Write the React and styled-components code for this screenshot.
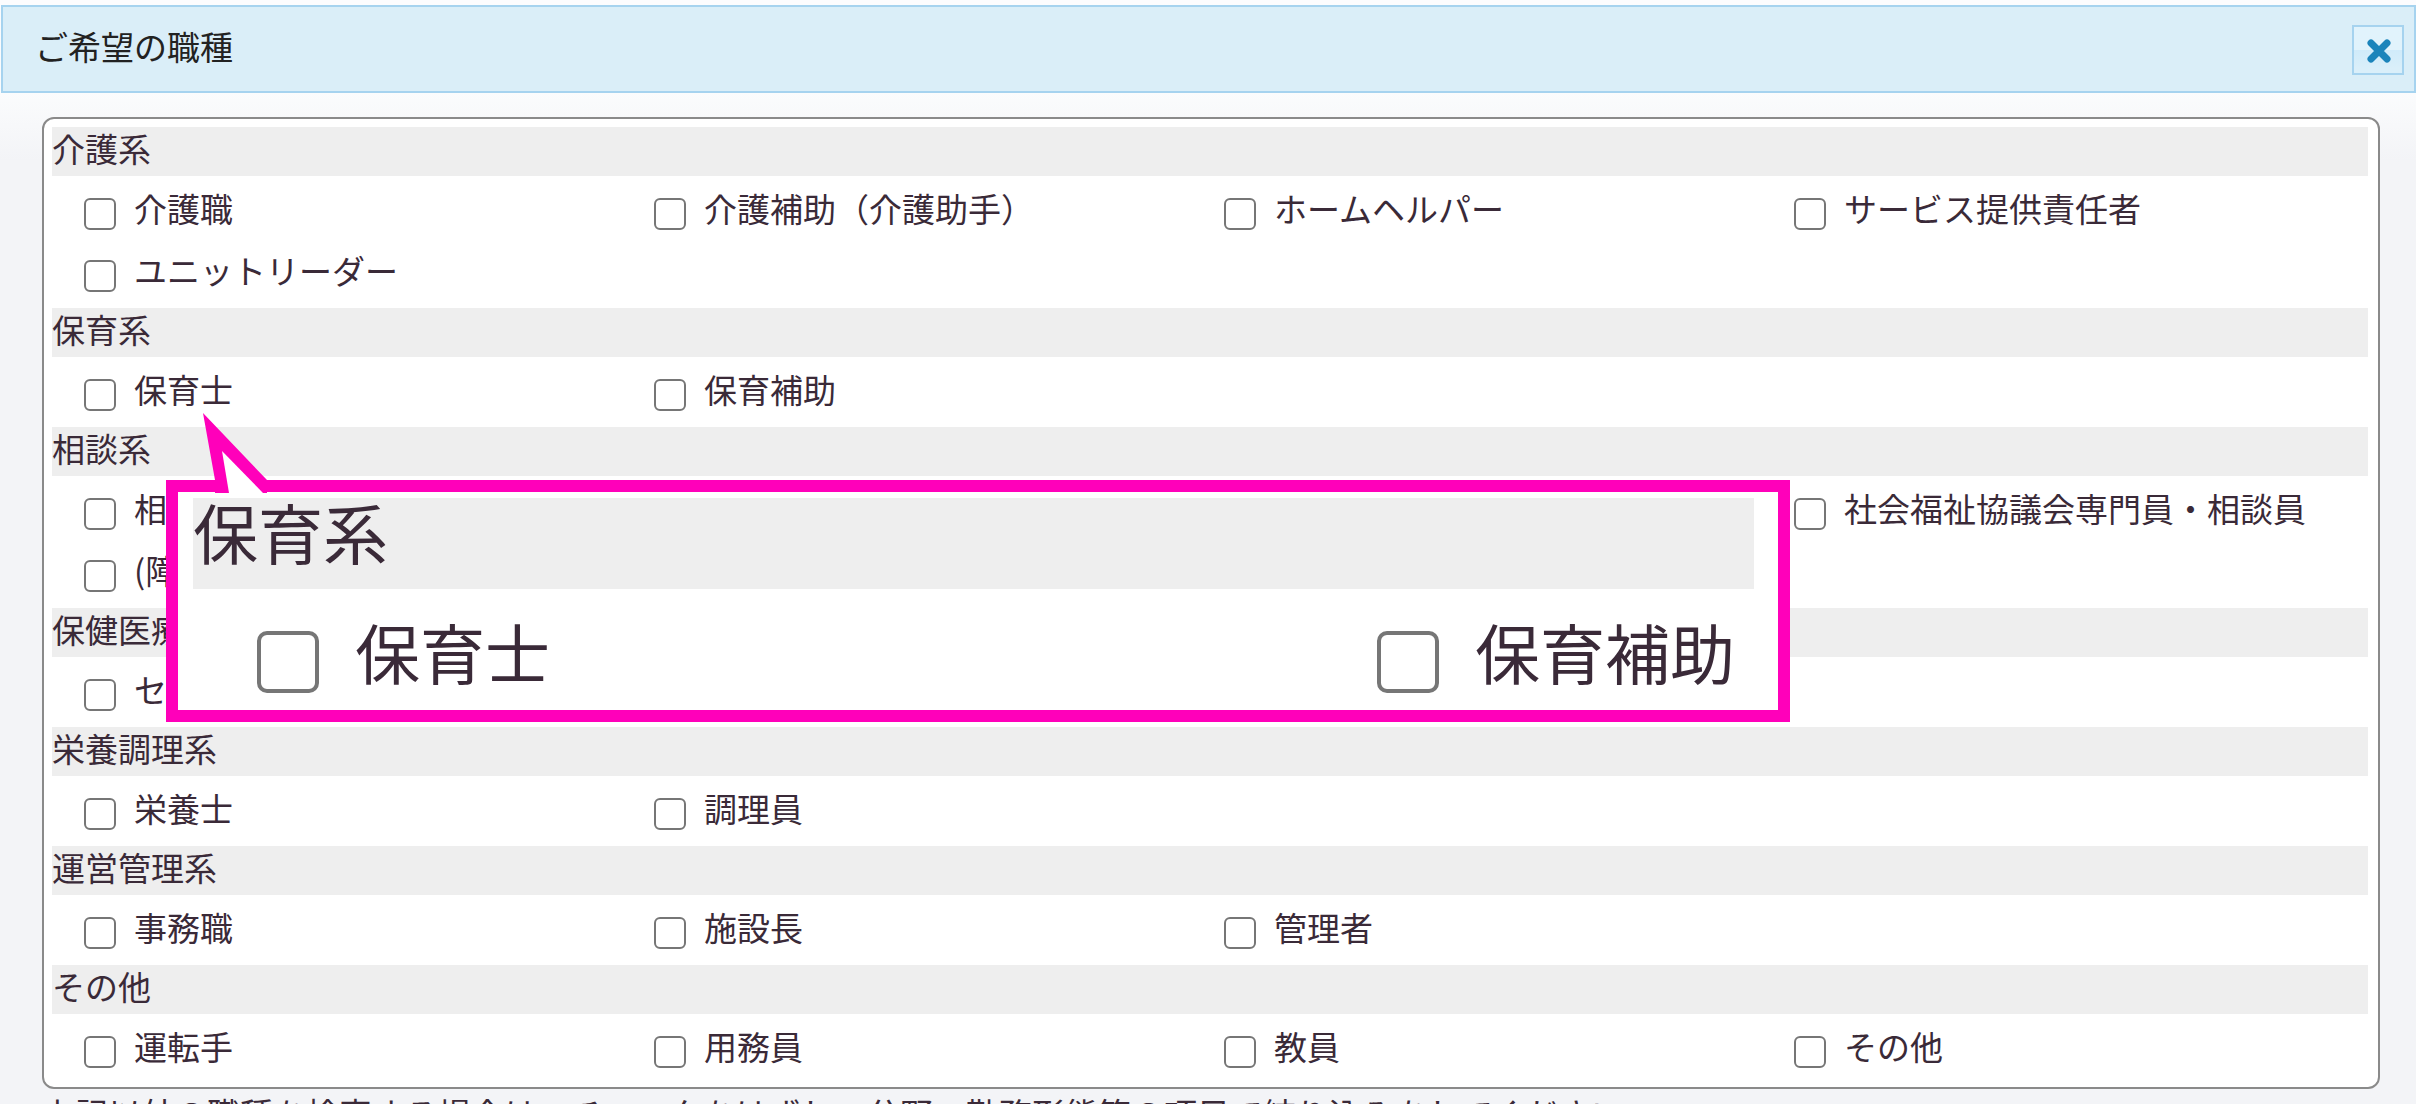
import React, { useId } from "react";
import styled, { createGlobalStyle } from "styled-components";

const GlobalStyle = createGlobalStyle`
  *, *::before, *::after { box-sizing: border-box; }
  html, body { margin: 0; height: 100%; overflow: hidden; }
  body {
    font-family: "Noto Sans CJK JP", sans-serif;
    font-size: 33px;
    line-height: 48px;
    color: #3a2a38;
    background: #f3f4f7;
  }
`;

const Dialog = styled.main`
  position: relative;
  height: 100vh;
  overflow: hidden;
  padding-top: 5px;
  background: linear-gradient(#fcfcfe 0, #fbfcfd 92px, #f3f4f7 160px);
`;

const TitleBar = styled.header`
  display: flex;
  align-items: center;
  justify-content: space-between;
  height: 88px;
  margin: 0 0 0 1px;
  padding: 2px 10px 0 32px;
  border: 2px solid #a6d3ef;
  background: #daeef8;
`;

const Title = styled.h1`
  margin: 0;
  padding-bottom: 8px;
  font-size: 33px;
  font-weight: 400;
  color: #222;
`;

const CloseButton = styled.button`
  display: grid;
  place-items: center;
  width: 52px;
  height: 50px;
  padding: 2px 0 0 2px;
  border: 2px solid #a6d3ef;
  background: linear-gradient(#e1f3fc 50%, #d0ebfa 50%, #daeffa 90%);
  cursor: pointer;
`;

const Panel = styled.section`
  margin: 24px 36px 0 42px;
  padding: 8px 10px 3px 8px;
  border: 2px solid #8a8a8a;
  border-radius: 12px;
  background: #fff;
`;

const Group = styled.fieldset`
  display: block;
  margin: 0;
  padding: 0;
  border: 0;
  min-width: 0;
`;

const GroupName = styled.legend`
  display: block;
  width: 100%;
  height: ${(p) => (p.$large ? 91 : 49)}px;
  margin-bottom: ${(p) => (p.$large ? 16 : 8)}px;
  padding: 0;
  font-size: ${(p) => (p.$large ? 65 : 33)}px;
  line-height: ${(p) => (p.$large ? 66 : 42)}px;
  background: #eee;
  white-space: nowrap;
`;

const Options = styled.div`
  display: grid;
  grid-template-columns: ${(p) => (p.$large ? "1120px 1fr" : "repeat(4, 1fr)")};
  padding: ${(p) => (p.$large ? "0 0 0 64px" : "0 4px 0 32px")};
`;

const Option = styled.div`
  display: flex;
  align-items: flex-start;
  gap: ${(p) => (p.$large ? 36 : 18)}px;
  height: ${(p) => (p.$large ? 116 : 62)}px;
  grid-column: ${(p) => p.$column || "auto"};
`;

const Check = styled.input`
  appearance: none;
  flex: none;
  width: ${(p) => (p.$large ? 62 : 32)}px;
  height: ${(p) => (p.$large ? 62 : 32)}px;
  margin: ${(p) => (p.$large ? 26 : 14)}px 0 0;
  border: ${(p) => (p.$large ? 4 : 2)}px solid #767676;
  border-radius: ${(p) => (p.$large ? 10 : 6)}px;
  background: #fff;
`;

const OptionLabel = styled.label`
  font-size: ${(p) => (p.$large ? 65 : 33)}px;
  line-height: ${(p) => (p.$large ? 92 : 48)}px;
  white-space: nowrap;
`;

const Note = styled.p`
  margin: 0 0 0 42px;
  white-space: nowrap;
`;

const Callout = styled.aside`
  position: absolute;
  top: 480px;
  left: 166px;
  width: 1624px;
  height: 242px;
  padding: 6px 24px 0 15px;
  border: 12px solid #ff00ba;
  background: #fff;
`;

const CalloutTail = styled.svg`
  position: absolute;
  left: 24px;
  top: -79px;
`;

const groups = [
  {
    name: "介護系",
    options: [
      { text: "介護職" },
      { text: "介護補助（介護助手）" },
      { text: "ホームヘルパー" },
      { text: "サービス提供責任者" },
      { text: "ユニットリーダー" },
    ],
  },
  { name: "保育系", options: [{ text: "保育士" }, { text: "保育補助" }] },
  {
    name: "相談系",
    options: [
      { text: "相" },
      { text: "社会福祉協議会専門員・相談員", column: 4 },
      { text: "(障" },
    ],
  },
  { name: "保健医療", options: [{ text: "セ" }] },
  { name: "栄養調理系", options: [{ text: "栄養士" }, { text: "調理員" }] },
  {
    name: "運営管理系",
    options: [{ text: "事務職" }, { text: "施設長" }, { text: "管理者" }],
  },
  {
    name: "その他",
    options: [
      { text: "運転手" },
      { text: "用務員" },
      { text: "教員" },
      { text: "その他" },
    ],
  },
];

function JobOption({ text, column, large }) {
  const id = useId();
  return (
    <Option $column={column} $large={large}>
      <Check type="checkbox" id={id} $large={large} />
      <OptionLabel htmlFor={id} $large={large}>
        {text}
      </OptionLabel>
    </Option>
  );
}

function JobGroup({ name, options, large }) {
  return (
    <Group>
      <GroupName $large={large}>{name}</GroupName>
      <Options $large={large}>
        {options.map((o) => (
          <JobOption key={o.text} {...o} large={large} />
        ))}
      </Options>
    </Group>
  );
}

export default function App() {
  return (
    <>
      <GlobalStyle />
      <Dialog>
        <TitleBar>
          <Title>ご希望の職種</Title>
          <CloseButton type="button" aria-label="閉じる">
            <svg width="26" height="26" viewBox="0 0 26 26" aria-hidden="true">
              <path
                d="M5 5L21 21M21 5L5 21"
                stroke="#1b84bb"
                strokeWidth="7"
                strokeLinecap="round"
              />
            </svg>
          </CloseButton>
        </TitleBar>
        <Panel>
          {groups.map((g) => (
            <JobGroup key={g.name} {...g} />
          ))}
        </Panel>
        <Note>
          上記以外の職種を検索する場合は、チェックをはずし、分野・勤務形態等の項目で絞り込みをしてください。
        </Note>
        <Callout>
          <CalloutTail width="80" height="80" viewBox="0 0 80 80" aria-hidden="true">
            <path d="M1 0L13 67V80H65V67Z" fill="#ff00ba" />
            <path d="M20 38L27 80H61Z" fill="#fff" />
          </CalloutTail>
          <JobGroup {...groups[1]} large />
        </Callout>
      </Dialog>
    </>
  );
}
